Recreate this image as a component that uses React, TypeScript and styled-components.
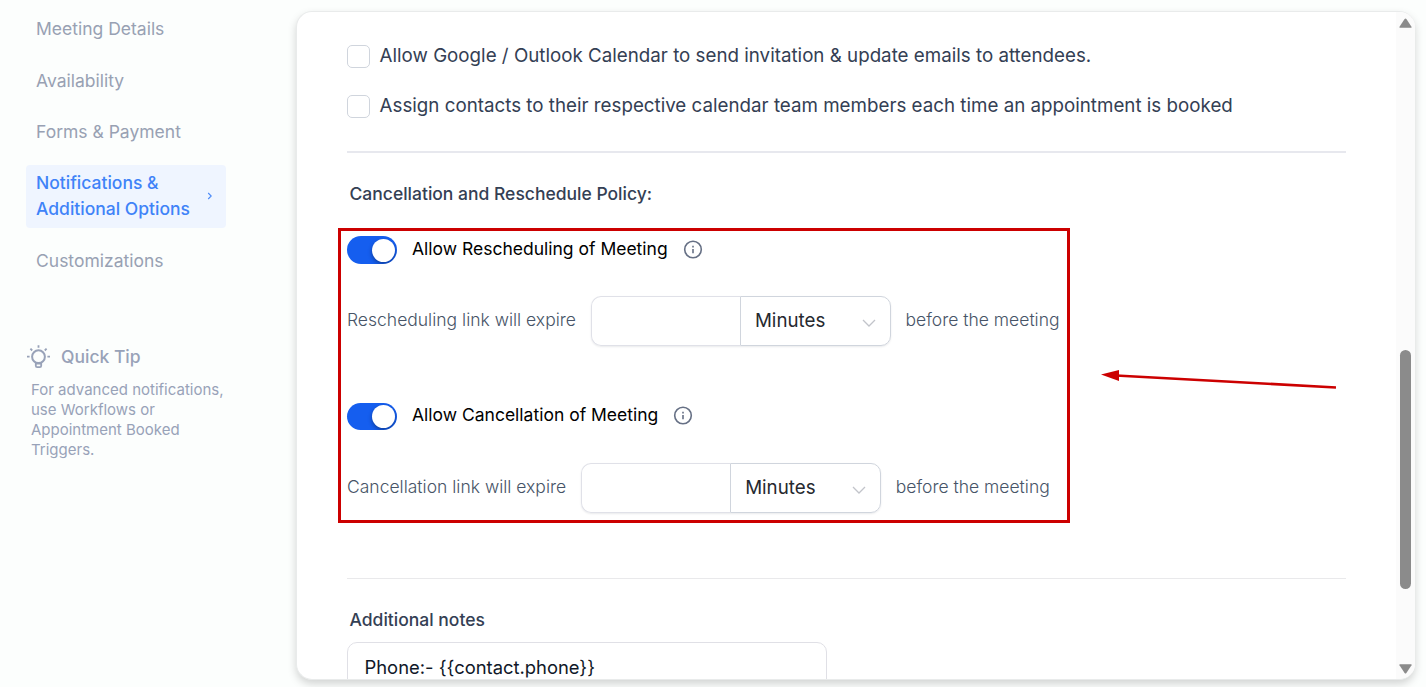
import React from 'react';
import styled, { createGlobalStyle } from 'styled-components';

const GlobalStyle = createGlobalStyle`
  * { box-sizing: border-box; }
  body {
    margin: 0;
    background: #fcfefd;
    font-family: Inter, 'Liberation Sans', sans-serif;
    overflow: hidden;
  }
`;

const Page = styled.div`
  position: relative;
  display: flex;
  width: 1426px;
  height: 687px;
  overflow: hidden;
  background: #fcfefd;
`;

const Sidebar = styled.aside`
  width: 296px;
  flex: none;
  padding: 16px 70px 0 26px;
`;

const Nav = styled.nav`
  display: flex;
  flex-direction: column;
`;

const NavItem = styled.a<{ $active?: boolean; $gap?: number }>`
  display: flex;
  align-items: center;
  justify-content: space-between;
  width: 200px;
  padding: ${(p) => (p.$active ? '5px 13px 6px 10px' : '0 10px')};
  margin-bottom: ${(p) => p.$gap ?? 0}px;
  border-radius: 4px;
  font-size: 17.5px;
  line-height: 26px;
  font-weight: ${(p) => (p.$active ? 500 : 400)};
  white-space: nowrap;
  color: ${(p) => (p.$active ? '#3f83f8' : '#98a1b3')};
  background: ${(p) => (p.$active ? '#eff5ff' : 'transparent')};
`;

const Tip = styled.section`
  margin-top: 70px;
  color: #98a2b8;
`;

const TipTitle = styled.h3`
  display: flex;
  align-items: center;
  gap: 11px;
  margin: 0;
  font-size: 17.5px;
  line-height: 26px;
  font-weight: 500;
`;

const TipBody = styled.p`
  margin: 10px 0 0 5px;
  font-size: 15px;
  line-height: 20px;
  white-space: nowrap;
`;

const Card = styled.main`
  display: flex;
  width: 1119px;
  height: 669px;
  margin-top: 11px;
  border: 1px solid #e9ebeb;
  border-right: 0;
  border-radius: 16px;
  background: #fff;
  box-shadow: 0 4px 9px rgba(0, 0, 0, 0.17);
  overflow: hidden;
`;

const Content = styled.div`
  flex: 1;
  height: 667px;
  padding: 30px 50px 0;
  overflow: hidden;
`;

const CheckRow = styled.label`
  display: flex;
  align-items: center;
  gap: 9.6px;
  height: 26px;
  margin-bottom: 24px;
  color: #344054;
  font-size: 18.76px;
  white-space: nowrap;
`;

const CheckBox = styled.span`
  width: 23px;
  height: 23px;
  margin-top: 3px;
  border: 1px solid #d0d5dd;
  border-radius: 5px;
  background: #fff;
`;

const Rule = styled.hr<{ $thick?: boolean }>`
  width: 999px;
  height: ${(p) => (p.$thick ? 2 : 1)}px;
  margin: ${(p) => (p.$thick ? '33px 0 28px' : '0 0 28px')};
  border: 0;
  background: ${(p) => (p.$thick ? '#e7e8ee' : '#e9e9eb')};
`;

const Heading = styled.h2`
  margin: 0 0 0 2.5px;
  color: #344054;
  font-size: 17.5px;
  line-height: 26px;
  font-weight: 500;
  white-space: nowrap;
`;

const Policy = styled.section`
  position: relative;
  height: 342px;
  margin-top: 29px;
`;

const ToggleRow = styled.div<{ $compact?: boolean }>`
  display: flex;
  align-items: center;
  height: ${(p) => (p.$compact ? 27 : 28)}px;
  margin-bottom: ${(p) => (p.$compact ? 33 : 32)}px;
`;

const Switch = styled.span`
  display: flex;
  justify-content: flex-end;
  align-items: center;
  width: 50px;
  height: 100%;
  padding-right: 2px;
  border-radius: 14px;
  background: #155eef;
  overflow: hidden;
`;

const Knob = styled.span`
  width: 23px;
  height: 23px;
  border-radius: 50%;
  background: #fff;
  box-shadow: 0 2px 4px rgba(0, 0, 0, 0.35);
`;

const ToggleCaption = styled.span<{ $compact?: boolean }>`
  display: flex;
  align-items: center;
  gap: 15px;
  margin: 0 0 ${(p) => (p.$compact ? 2 : 0)}px 15px;
`;

const ToggleLabel = styled.span`
  margin-top: -2px;
  color: #000;
  font-size: 17.5px;
  line-height: 26px;
  white-space: nowrap;
`;

const ExpiryRow = styled.div<{ $gap: number }>`
  display: flex;
  align-items: center;
  height: 50px;
  margin-bottom: ${(p) => p.$gap}px;
  color: #475467;
  font-size: 17.5px;
  font-weight: 300;
  white-space: nowrap;
`;

const RowText = styled.span`
  margin-top: -3px;
`;

const Unit = styled.span`
  margin-top: -2px;
`;

const InputGroup = styled.div`
  display: flex;
  width: 300px;
  height: 50px;
  margin: 0 14.6px 0 15px;
  border-radius: 10px;
  box-shadow: 0 1px 2px rgba(16, 24, 40, 0.09);
`;

const NumberField = styled.span`
  width: 149px;
  border: 1px solid #e0e1e8;
  border-right: 0;
  border-radius: 10px 0 0 10px;
  background: #fff;
`;

const Select = styled.span`
  display: flex;
  flex: 1;
  align-items: center;
  justify-content: space-between;
  padding: 0 14px;
  border: 1px solid #d0d5dd;
  border-radius: 0 10px 10px 0;
  background: #fff;
  color: #26292f;
  font-size: 18.76px;
  font-weight: 400;

  svg {
    margin-top: 3px;
  }
`;

const Notes = styled.div`
  width: 480px;
  height: 90px;
  margin-top: 9px;
  padding: 11px 16.5px;
  border: 1px solid #e0e0e6;
  border-radius: 10px;
  color: #101828;
  font-size: 18.4px;
  line-height: 26px;
`;

const ScrollTrack = styled.div`
  display: flex;
  flex-direction: column;
  align-items: center;
  width: 19px;
  padding: 6px 0 5px;
  background: #fbfbfb;
`;

const ScrollThumb = styled.div`
  width: 11px;
  height: 239px;
  margin: 322px 0 auto;
  border-radius: 6px;
  background: #8b8b8b;
`;

const Highlight = styled.div`
  position: absolute;
  left: -9px;
  top: -8px;
  width: 732px;
  height: 295px;
  border: 3px solid #cc0000;
  pointer-events: none;
`;

const Arrow = styled.svg`
  position: absolute;
  left: 1098px;
  top: 362px;
`;

const InfoIcon = () => (
  <svg width="20" height="20" viewBox="0 0 20 20" fill="none" stroke="#667085" strokeWidth="1.6">
    <circle cx="10" cy="9.5" r="8.3" />
    <path d="M10 9v4.2M10 5.7v1.8" />
  </svg>
);

const ChevronDown = () => (
  <svg width="14" height="8" viewBox="0 0 14 8" fill="none" stroke="#c2c4ca" strokeWidth="1.3">
    <path d="M1 1l6 6 6-6" />
  </svg>
);

const BulbIcon = () => (
  <svg width="24" height="24" viewBox="0 0 24 24" fill="none" stroke="#98a2b8" strokeWidth="2">
    <circle cx="12.5" cy="11.7" r="6.4" />
    <path d="M9.8 17.5v3.3q0 1.4 1.4 1.4h2.6q1.4 0 1.4-1.4v-3.3M10 18.7h5" strokeWidth="1.8" />
    <path d="M12.5 .3v2.4M1 11.7h2.6M21.4 11.7h2.6M4.4 3.7l1.8 1.8M20.6 3.7l-1.8 1.8" strokeWidth="1.8" />
  </svg>
);

const ScrollArrow = ({ down }: { down?: boolean }) => (
  <svg width="13" height="10" viewBox="0 0 13 10" fill="#8b8b8b">
    <path
      d={
        down
          ? 'M1 .3h11q1 0 .5 1L7.4 8.9q-.9 1.1-1.8 0L.5 1.3Q0 .3 1 .3z'
          : 'M1 9.7h11q1 0 .5-1L7.4 1.1q-.9-1.1-1.8 0L.5 8.7q-.5 1 .5 1z'
      }
    />
  </svg>
);

const Expiry = ({ label, gap }: { label: string; gap: number }) => (
  <ExpiryRow $gap={gap}>
    <RowText>{label}</RowText>
    <InputGroup>
      <NumberField />
      <Select>
        <Unit>Minutes</Unit>
        <ChevronDown />
      </Select>
    </InputGroup>
    <RowText>before the meeting</RowText>
  </ExpiryRow>
);

const Toggle = ({ label, compact }: { label: string; compact?: boolean }) => (
  <ToggleRow $compact={compact}>
    <Switch>
      <Knob />
    </Switch>
    <ToggleCaption $compact={compact}>
      <ToggleLabel>{label}</ToggleLabel>
      <InfoIcon />
    </ToggleCaption>
  </ToggleRow>
);

export default function App() {
  return (
    <Page>
      <GlobalStyle />
      <Sidebar>
        <Nav>
          <NavItem $gap={26}>Meeting Details</NavItem>
          <NavItem $gap={25}>Availability</NavItem>
          <NavItem $gap={20}>Forms &amp; Payment</NavItem>
          <NavItem $active $gap={20}>
            <span>
              Notifications &amp;
              <br />
              Additional Options
            </span>
            <svg width="6" height="8" viewBox="0 0 6 8" fill="none" stroke="#4d8bf8" strokeWidth="1.1">
              <path d="M1.2 1l3 3-3 3" />
            </svg>
          </NavItem>
          <NavItem>Customizations</NavItem>
        </Nav>
        <Tip>
          <TipTitle>
            <BulbIcon />
            Quick Tip
          </TipTitle>
          <TipBody>
            For advanced notifications,
            <br />
            use Workflows or
            <br />
            Appointment Booked
            <br />
            Triggers.
          </TipBody>
        </Tip>
      </Sidebar>
      <Card>
        <Content>
          <CheckRow>
            <CheckBox />
            Allow Google / Outlook Calendar to send invitation &amp; update emails to attendees.
          </CheckRow>
          <CheckRow>
            <CheckBox />
            Assign contacts to their respective calendar team members each time an appointment is booked
          </CheckRow>
          <Rule $thick />
          <Heading>Cancellation and Reschedule Policy:</Heading>
          <Policy>
            <Toggle label="Allow Rescheduling of Meeting" />
            <Expiry label="Rescheduling link will expire" gap={57} />
            <Toggle label="Allow Cancellation of Meeting" compact />
            <Expiry label="Cancellation link will expire" gap={0} />
            <Highlight />
          </Policy>
          <Rule />
          <Heading>Additional notes</Heading>
          <Notes>{'Phone:- {{contact.phone}}'}</Notes>
        </Content>
        <ScrollTrack>
          <ScrollArrow />
          <ScrollThumb />
          <ScrollArrow down />
        </ScrollTrack>
      </Card>
      <Arrow width="242" height="30" viewBox="0 0 242 30">
        <path d="M18 13.5L238 25.5" stroke="#cc0000" strokeWidth="2.6" />
        <path d="M3 12.6L21 8v11z" fill="#cc0000" />
      </Arrow>
    </Page>
  );
}
